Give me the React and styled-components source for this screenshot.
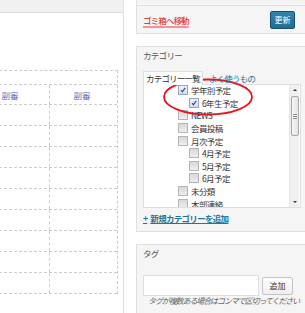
import styled, { createGlobalStyle } from "styled-components";

const GlobalStyle = createGlobalStyle`
  html, body {
    margin: 0;
    padding: 0;
    background: #fff;
  }
  body {
    width: 305px;
    height: 313px;
    overflow: hidden;
    font-family: "Noto Sans CJK JP", "Noto Sans", sans-serif;
    color: #333;
  }
`;

const Page = styled.div`
  display: flex;
  align-items: flex-start;
  width: 305px;
  height: 313px;
  overflow: hidden;
`;

const LeftPanel = styled.div`
  flex-shrink: 0;
  width: 123px;
  height: 313px;
  border-right: 1px solid #dfdfdf;
  overflow: hidden;
`;

const TopBar = styled.div`
  height: 12px;
  background: #f1f1f1;
  border-bottom: 1px solid #dcdcdc;
`;

const Grid = styled.div`
  margin: 57px 0 0 -26px;
  width: 143px;
  border-top: 1px dashed #ccc;
  border-right: 1px dashed #ccc;
`;

const GridRow = styled.div`
  display: grid;
  grid-template-columns: ${({ $span }) => ($span ? "1fr" : "75px 1fr")};
  height: ${({ $h }) => $h}px;
  border-bottom: 1px dashed #ccc;
`;

const GridCell = styled.div`
  display: flex;
  align-items: center;
  justify-content: center;
  padding-right: 3px;
  font-size: 8.5px;
  color: #7171b5;
  & + & {
    border-left: 1px dashed #ccc;
  }
`;

const RightColumn = styled.div`
  flex-shrink: 0;
  width: 172px;
  margin-left: 12px;
  display: flex;
  flex-direction: column;
  gap: 12px;
`;

const Widget = styled.div`
  position: relative;
  background: #f5f5f5;
  border: 1px solid #dfdfdf;
  border-top: ${({ $open }) => ($open ? "none" : "1px solid #dfdfdf")};
`;

const PublishStrip = styled.div`
  height: 5px;
  border-bottom: 1px solid #dfdfdf;
`;

const PublishActions = styled.div`
  height: 27px;
  display: flex;
  align-items: center;
  justify-content: space-between;
  padding: 0 12px 0 6px;
`;

const TrashLink = styled.a`
  font-size: 8.5px;
  letter-spacing: -0.9px;
  color: #e01010;
  text-decoration: underline;
  text-decoration-color: #f79090;
  text-decoration-thickness: 2px;
  text-underline-offset: 2px;
`;

const PrimaryButton = styled.button`
  width: 25px;
  height: 18px;
  padding: 0;
  font-family: inherit;
  font-size: 8px;
  color: #fff;
  background: linear-gradient(#2e85b0, #206d93);
  border: 1px solid #174f6b;
  border-radius: 2px;
`;

const WidgetTitle = styled.div`
  height: 19px;
  line-height: 17px;
  padding-left: 6px;
  font-size: 8.5px;
  letter-spacing: -0.7px;
  color: #555;
`;

const WidgetBody = styled.div`
  padding: 5px 6px 8px;
`;

const Tabs = styled.div`
  display: flex;
  align-items: flex-end;
  gap: 3px;
  height: 13px;
`;

const Tab = styled.div`
  position: relative;
  z-index: 1;
  height: 13px;
  line-height: 13px;
  padding: 0 2px;
  margin-bottom: -1px;
  font-size: 8.5px;
  letter-spacing: -0.8px;
  color: ${({ $active }) => ($active ? "#333" : "#21759b")};
  background: ${({ $active }) => ($active ? "#fff" : "transparent")};
  border: 1px solid ${({ $active }) => ($active ? "#dfdfdf" : "transparent")};
  border-bottom: none;
`;

const ListBox = styled.div`
  display: flex;
  height: 122px;
  background: #fff;
  border: 1px solid #dfdfdf;
`;

const List = styled.ul`
  flex: 1;
  margin: -1px 0 0;
  padding: 0 0 0 34px;
  list-style: none;
  overflow: hidden;
`;

const Item = styled.li`
  display: flex;
  align-items: center;
  gap: 3px;
  height: 12.6px;
  padding-left: ${({ $level }) => $level * 11}px;
  font-size: 8.5px;
  letter-spacing: -0.6px;
  color: #333;
  white-space: nowrap;
`;

const Box = styled.span`
  flex-shrink: 0;
  display: flex;
  align-items: center;
  justify-content: center;
  width: 8px;
  height: 8px;
  border: 1px solid ${({ $checked }) => ($checked ? "#9aa4b8" : "#b5b5b5")};
  background: ${({ $checked }) =>
    $checked ? "linear-gradient(#eef1f7, #d6dce8)" : "linear-gradient(#d8d8d8, #eeeeee)"};
`;

const Scrollbar = styled.div`
  width: 9px;
  margin-right: 1px;
  display: flex;
  flex-direction: column;
  align-items: center;
  background: #f0f0f0;
  border-left: 1px solid #e6e6e6;
`;

const Arrow = styled.span`
  width: 0;
  height: 0;
  margin: ${({ $down }) => ($down ? "auto 0 4px" : "4px 0 0")};
  border-left: 2px solid transparent;
  border-right: 2px solid transparent;
  ${({ $down }) => ($down ? "border-top" : "border-bottom")}: 2px solid #333;
`;

const Thumb = styled.div`
  width: 8px;
  height: 40px;
  margin-top: 5px;
  display: flex;
  flex-direction: column;
  align-items: center;
  justify-content: center;
  gap: 1px;
  background: linear-gradient(90deg, #f7f7f7, #e4e4e4);
  border: 1px solid #a9a9a9;
  border-radius: 2px;
  box-sizing: border-box;
`;

const Grip = styled.span`
  width: 4px;
  height: 1px;
  background: #8a8a8a;
`;

const AddLink = styled.a`
  display: flex;
  gap: 3px;
  margin-top: 5px;
  height: 10px;
  line-height: 10px;
  font-size: 8.5px;
  font-weight: bold;
  letter-spacing: -0.7px;
  color: #21759b;
  text-decoration: underline;
`;

const Annotation = styled.svg`
  position: absolute;
  left: 25px;
  top: 30px;
  overflow: visible;
  pointer-events: none;
`;

const TagRow = styled.div`
  display: flex;
  align-items: center;
  gap: 3px;
  margin-top: 6px;
`;

const TagInput = styled.input`
  width: 116px;
  height: 21px;
  padding: 0;
  box-sizing: border-box;
  background: #fff;
  border: 1px solid #dfdfdf;
`;

const SecondaryButton = styled.button`
  width: 31px;
  height: 18px;
  padding: 0;
  font-family: inherit;
  font-size: 8px;
  color: #333;
  background: linear-gradient(#fefefe, #eeeeee);
  border: 1px solid #c4c4c4;
  border-radius: 2px;
`;

const Hint = styled.p`
  margin: 0;
  padding-left: 5px;
  font-size: 8px;
  line-height: 10px;
  letter-spacing: -1.1px;
  font-style: italic;
  color: #666;
  white-space: nowrap;
`;

const Check = () => (
  <svg width="6" height="6" viewBox="0 0 6 6">
    <path d="M1 3.2 L2.4 4.8 L5.2 0.8" fill="none" stroke="#2850a8" strokeWidth="1.2" />
  </svg>
);

const categories = [
  { label: "学年別予定", level: 0, checked: true },
  { label: "6年生予定", level: 1, checked: true },
  { label: "NEWS", level: 0 },
  { label: "会員投稿", level: 0 },
  { label: "月次予定", level: 0 },
  { label: "4月予定", level: 1 },
  { label: "5月予定", level: 1 },
  { label: "6月予定", level: 1 },
  { label: "未分類", level: 0 },
  { label: "本部連絡", level: 0 },
];

const rows = [21, 21, 21, 21, 21, 21, 21, 21, 21];

export default function App() {
  return (
    <>
      <GlobalStyle />
      <Page>
        <LeftPanel>
          <TopBar />
          <Grid>
            <GridRow $span $h={13}>
              <GridCell />
            </GridRow>
            <GridRow $h={19}>
              <GridCell>副審</GridCell>
              <GridCell>副審</GridCell>
            </GridRow>
            {rows.map((h, i) => (
              <GridRow key={i} $h={h - 1}>
                <GridCell />
                <GridCell />
              </GridRow>
            ))}
          </Grid>
        </LeftPanel>

        <RightColumn>
          <Widget $open>
            <PublishStrip />
            <PublishActions>
              <TrashLink>ゴミ箱へ移動</TrashLink>
              <PrimaryButton>更新</PrimaryButton>
            </PublishActions>
          </Widget>

          <Widget>
            <WidgetTitle>カテゴリー</WidgetTitle>
            <WidgetBody>
              <Tabs>
                <Tab $active>カテゴリー一覧</Tab>
                <Tab>よく使うもの</Tab>
              </Tabs>
              <ListBox>
                <List>
                  {categories.map((c) => (
                    <Item key={c.label} $level={c.level}>
                      <Box $checked={c.checked}>{c.checked && <Check />}</Box>
                      {c.label}
                    </Item>
                  ))}
                </List>
                <Scrollbar>
                  <Arrow />
                  <Thumb>
                    <Grip />
                    <Grip />
                    <Grip />
                  </Thumb>
                  <Arrow $down />
                </Scrollbar>
              </ListBox>
              <AddLink>
                <span>+</span>
                <span>新規カテゴリーを追加</span>
              </AddLink>
            </WidgetBody>
            <Annotation width="92" height="40" viewBox="0 0 92 40">
              <ellipse cx="46" cy="20" rx="44" ry="17.5" fill="none" stroke="#e8141c" strokeWidth="1.8" />
            </Annotation>
          </Widget>

          <Widget>
            <WidgetTitle>タグ</WidgetTitle>
            <WidgetBody>
              <TagRow>
                <TagInput />
                <SecondaryButton>追加</SecondaryButton>
              </TagRow>
              <Hint>タグが複数ある場合はコンマで区切ってください</Hint>
            </WidgetBody>
          </Widget>
        </RightColumn>
      </Page>
    </>
  );
}
